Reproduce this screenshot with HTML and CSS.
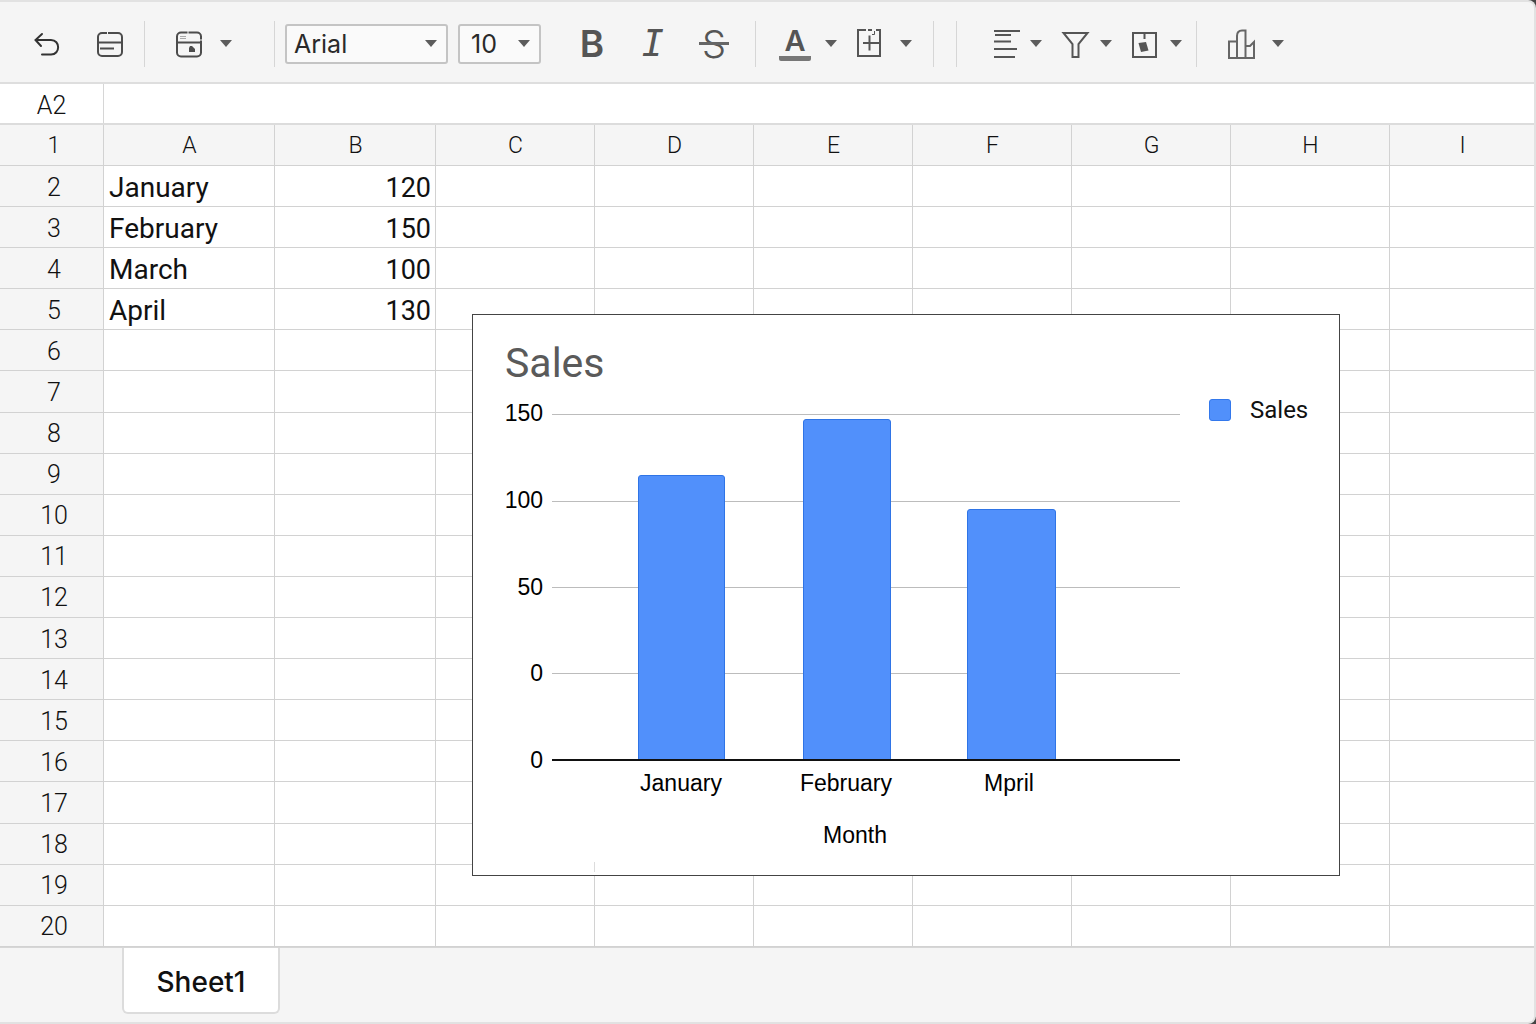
FILE: index.html
```html
<!DOCTYPE html>
<html lang="en">
<head>
<meta charset="utf-8">
<title>Sheet1</title>
<link rel="stylesheet" href="styles.css">
</head>
<body>
<div class="window">
  <header class="toolbar">
    <div class="group group-edit">
      <button class="tool" aria-label="Undo"><svg class="icon dark" viewBox="0 0 32 40"><path d="M11 13 L4.500 19 L10 25 M4.500 19 H20 C29.500 19 29.500 33.500 20 33.500 H11" stroke-linecap="round"/></svg></button>
      <button class="tool" aria-label="Rows"><svg class="icon" viewBox="0 0 32 40"><rect x="4" y="12" width="24" height="23" rx="4"/><path d="M4 21.500 H28 M6 27.500 H20"/><path d="M13.500 10 V13" stroke="#f5f5f5" stroke-width="1"/></svg></button>
    </div>
    <div class="group group-view">
      <button class="drop" aria-label="Format"><svg class="icon" viewBox="0 0 32 40"><rect x="4" y="11.500" width="24" height="24" rx="4"/><path d="M4 21.500 H28"/><path d="M15 9 V13 M26 19 H30" stroke="#f5f5f5" stroke-width="1"/><path d="M7 15.500 H13 M7 17.500 H13" stroke="#aaa" stroke-width="1"/><path d="M17 25 H19 L22 28 V31 H16 V27 Z" fill="#4c4c4c" stroke="none"/></svg><span class="caret"></span></button>
    </div>
    <div class="group group-font">
      <label class="picker picker-font"><select aria-label="Font"><option>Arial</option></select><span class="caret"></span></label>
      <label class="picker picker-size"><select aria-label="Font size"><option>10</option></select><span class="caret"></span></label>
    </div>
    <div class="group group-style">
      <button class="tool bold" aria-label="Bold">B</button>
      <button class="tool italic" aria-label="Italic">I</button>
      <button class="tool strike" aria-label="Strikethrough">S</button>
    </div>
    <div class="group group-cell">
      <button class="drop" aria-label="Text color"><span class="ink">A</span><span class="caret"></span></button>
      <button class="drop" aria-label="Borders"><svg class="icon grey" viewBox="0 0 32 40"><path d="M12 9 H4 V35 H26 V9 H22 M14 9 H18"/><path d="M9 22 H26 M15.500 14.500 V29.500"/><path d="M18 13.500 H20.500 V10" stroke-width="1"/></svg><span class="caret"></span></button>
    </div>
    <div class="group group-data">
      <button class="drop" aria-label="Align"><svg class="icon grey" viewBox="0 0 32 40"><path d="M5 10 H31 M6 14 H22 M5 20.500 H22 M5 28 H28 M5 36 H26"/></svg><span class="caret"></span></button>
      <button class="drop" aria-label="Filter"><svg class="icon grey" viewBox="0 0 32 40"><path d="M4.500 12 H28.500 L19.500 23 V36 H13.500 V23 Z"/></svg><span class="caret"></span></button>
      <button class="drop" aria-label="Insert"><svg class="icon grey" viewBox="0 0 32 40"><rect x="4" y="12" width="23" height="24"/><path d="M15.500 12 V18"/><path d="M9.500 22 L17 21 L19.500 29.500 L12 31 Z" fill="#555" stroke="none"/></svg><span class="caret"></span></button>
    </div>
    <div class="group group-chart">
      <button class="drop" aria-label="Insert chart"><svg class="icon grey thin" viewBox="0 0 32 40"><path d="M12 20.500 H4 V37 H29 V21 L25 25 H21 M12 37 V15 Q12 9.500 17 9.500 H20.500 V37"/></svg><span class="caret"></span></button>
    </div>
  </header>

  <div class="formula-bar">
    <input class="name-box" aria-label="Cell name" value="A2">
    <input class="formula" aria-label="Formula">
  </div>

  <main class="sheet">
    <table class="grid">
      <colgroup><col class="c-num"><col class="c-a"><col class="c-b"><col class="c-std"><col class="c-std"><col class="c-std"><col class="c-std"><col class="c-std"><col class="c-std"><col></colgroup>
      <thead><tr><th>1</th><th>A</th><th>B</th><th>C</th><th>D</th><th>E</th><th>F</th><th>G</th><th>H</th><th>I</th></tr></thead>
      <tbody>
        <tr><th>2</th><td>January</td><td class="num">120</td><td></td><td></td><td></td><td></td><td></td><td></td><td></td></tr>
        <tr><th>3</th><td>February</td><td class="num">150</td><td></td><td></td><td></td><td></td><td></td><td></td><td></td></tr>
        <tr><th>4</th><td>March</td><td class="num">100</td><td></td><td></td><td></td><td></td><td></td><td></td><td></td></tr>
        <tr><th>5</th><td>April</td><td class="num">130</td><td></td><td></td><td></td><td></td><td></td><td></td><td></td></tr>
        <tr><th>6</th><td></td><td></td><td></td><td></td><td></td><td></td><td></td><td></td><td></td></tr>
        <tr><th>7</th><td></td><td></td><td></td><td></td><td></td><td></td><td></td><td></td><td></td></tr>
        <tr><th>8</th><td></td><td></td><td></td><td></td><td></td><td></td><td></td><td></td><td></td></tr>
        <tr><th>9</th><td></td><td></td><td></td><td></td><td></td><td></td><td></td><td></td><td></td></tr>
        <tr><th>10</th><td></td><td></td><td></td><td></td><td></td><td></td><td></td><td></td><td></td></tr>
        <tr><th>11</th><td></td><td></td><td></td><td></td><td></td><td></td><td></td><td></td><td></td></tr>
        <tr><th>12</th><td></td><td></td><td></td><td></td><td></td><td></td><td></td><td></td><td></td></tr>
        <tr><th>13</th><td></td><td></td><td></td><td></td><td></td><td></td><td></td><td></td><td></td></tr>
        <tr><th>14</th><td></td><td></td><td></td><td></td><td></td><td></td><td></td><td></td><td></td></tr>
        <tr><th>15</th><td></td><td></td><td></td><td></td><td></td><td></td><td></td><td></td><td></td></tr>
        <tr><th>16</th><td></td><td></td><td></td><td></td><td></td><td></td><td></td><td></td><td></td></tr>
        <tr><th>17</th><td></td><td></td><td></td><td></td><td></td><td></td><td></td><td></td><td></td></tr>
        <tr><th>18</th><td></td><td></td><td></td><td></td><td></td><td></td><td></td><td></td><td></td></tr>
        <tr><th>19</th><td></td><td></td><td></td><td></td><td></td><td></td><td></td><td></td><td></td></tr>
        <tr><th>20</th><td></td><td></td><td></td><td></td><td></td><td></td><td></td><td></td><td></td></tr>
      </tbody>
    </table>

    <figure class="chart">
      <figcaption class="chart-title">Sales</figcaption>
      <div class="chart-body">
        <svg class="plot" width="708" height="488" viewBox="0 0 708 488" role="img" aria-label="Sales by month">
          <path class="rule" d="M79 27.500 H707 M79 114.500 H707 M79 200.500 H707 M79 286.500 H707"/>
          <path class="bar" d="M165.500 373 V91 Q165.500 88.500 168 88.500 H249 Q251.500 88.500 251.500 91 V373"/>
          <path class="bar" d="M330.500 373 V35 Q330.500 32.500 333 32.500 H415 Q417.500 32.500 417.500 35 V373"/>
          <path class="bar" d="M494.500 373 V125 Q494.500 122.500 497 122.500 H580 Q582.500 122.500 582.500 125 V373"/>
          <path class="axis" d="M79 373 H707"/>
          <path class="tick" d="M121.500 475 V485"/>
          <g text-anchor="end">
            <text x="70" y="34">150</text>
            <text x="70" y="121">100</text>
            <text x="70" y="208">50</text>
            <text x="70" y="294">0</text>
            <text x="70" y="381">0</text>
          </g>
          <g text-anchor="middle">
            <text x="208" y="404">January</text>
            <text x="373" y="404">February</text>
            <text x="536" y="404">Mpril</text>
            <text x="382" y="456">Month</text>
          </g>
        </svg>
        <div class="legend"><span class="swatch"></span>Sales</div>
      </div>
    </figure>
  </main>

  <footer class="tabs">
    <button class="tab">Sheet1</button>
  </footer>
</div>
</body>
</html>
```
FILE: styles.css
```css
* { box-sizing: border-box; }

body {
  margin: 0;
  background: #444;
  color: #111;
  font-family: Roboto, "Liberation Sans", sans-serif;
}

button, input, select {
  margin: 0;
  padding: 0;
  border: 0;
  background: none;
  color: inherit;
  font: inherit;
}

.window {
  display: flex;
  flex-direction: column;
  min-height: 100vh;
  border: 2px solid #e2e2e2;
  border-left: 0;
  border-radius: 0 8px 8px 0;
  background: #f5f5f5;
  overflow: hidden;
}

/* Toolbar */
.toolbar {
  display: flex;
  align-items: center;
  height: 82px;
  padding-top: 4px;
  border-bottom: 2px solid #dedede;
}

.group {
  display: flex;
  align-items: center;
  height: 46px;
  border-right: 1px solid #d6d6d6;
}

.group-edit { gap: 31px; padding: 0 18px 0 31px; }
.group-view { padding: 0 38px 0 28px; }
.group-font { gap: 10px; padding-left: 10px; border: 0; }
.group-style { gap: 29px; padding: 0 25px 0 35px; }
.group-cell { gap: 13px; padding: 0 17px 0 23px; }
.group-data { gap: 13px; margin-left: 22px; padding: 0 10px 0 32px; border-left: 1px solid #d6d6d6; }
.group-chart { padding-left: 28px; border: 0; }

.tool, .drop {
  display: flex;
  align-items: center;
  justify-content: center;
  height: 46px;
  color: #555;
}

.tool { width: 32px; }
.drop { gap: 11px; }
.group-cell .drop { gap: 10px; }
.group-data .drop { gap: 5px; }

.icon {
  width: 32px;
  height: 40px;
  margin-bottom: 6px;
  fill: none;
  stroke: #4c4c4c;
  stroke-width: 2;
}

.dark { stroke: #333; }
.grey { stroke: #555; }
.thin { stroke: #666; }

.caret {
  width: 20px;
  height: 8px;
  background: #5c5c5c;
  clip-path: polygon(4px 0, 16px 0, 10px 7px);
}

.picker {
  display: flex;
  align-items: center;
  height: 40px;
  border: 2px solid #c4c4c4;
  border-radius: 3px;
  background: #fafafa;
  color: #2a2a2a;
  font-family: Inter, sans-serif;
  font-size: 25px;
}

.picker select {
  flex: 1;
  min-width: 0;
  appearance: none;
  outline: 0;
}

.picker .caret { margin-right: 5px; }
.picker-font { width: 163px; padding-left: 7px; }
.picker-size { width: 83px; padding-left: 11px; }

.bold { font: 600 37px/46px Inter, sans-serif; }
.italic { font: italic 37px/46px "DejaVu Sans Mono", monospace; }
.strike { position: relative; font: 300 38px/46px Inter, sans-serif; }
.strike::after {
  content: "";
  position: absolute;
  inset: 21px 1px auto;
  height: 3px;
  background: #666;
}

.ink {
  width: 32px;
  padding-bottom: 1px;
  border-bottom: 5px solid #777;
  border-radius: 2px;
  font: 600 29px/28px Inter, sans-serif;
}

/* Formula bar */
.formula-bar {
  display: flex;
  height: 41px;
  border-bottom: 2px solid #dcdcdc;
  background: #fff;
}

.name-box {
  width: 104px;
  padding-top: 4px;
  border-right: 1px solid #d6d6d6;
  color: #111;
  font-size: 25px;
  font-weight: 300;
  text-align: center;
}

.formula { flex: 1; min-width: 0; padding: 0 6px; font-size: 25px; }

/* Grid */
.sheet { position: relative; }

.grid {
  width: 100%;
  height: 822px;
  table-layout: fixed;
  border-spacing: 0;
  background: #fff;
}

.c-num { width: 104px; }
.c-a { width: 171px; }
.c-b { width: 161px; }
.c-std { width: 159px; }

.grid th, .grid td {
  height: 41px;
  padding: 3px 4px 0 5px;
  border-right: 1px solid #d2d2d2;
  border-bottom: 1px solid #d2d2d2;
  line-height: 32px;
  white-space: nowrap;
}

.grid th {
  background: #f5f5f5;
  color: #111;
  font-size: 25px;
  font-weight: 300;
}

.grid th:first-child { padding-left: 9px; }
.grid thead th { padding-top: 1px; font-size: 23px; }
.grid td { font-size: 28px; text-align: left; }
.grid .num { font-size: 27px; text-align: right; }
.grid tr > :last-child { border-right: 0; }

/* Floating chart */
.chart {
  position: absolute;
  top: 189px;
  left: 472px;
  width: 868px;
  margin: 0;
  padding-top: 24px;
  border: 1px solid #444;
  background: #fff;
}

.chart-title {
  padding-left: 32px;
  color: #5a5a5a;
  font-size: 41px;
  line-height: 48px;
}

.chart-body { display: flex; align-items: flex-start; }
.plot { flex: none; font: 23px "Liberation Sans", Arial, sans-serif; }
.rule { fill: none; stroke: #bcbcbc; }
.tick { stroke: #dcdcdc; }
.bar { fill: #5190fb; stroke: #2f74e6; }
.axis { stroke: #111; stroke-width: 2; }

.legend {
  display: flex;
  align-items: center;
  gap: 19px;
  margin-left: 28px;
  padding-top: 8px;
  font-size: 24px;
  line-height: 30px;
}

.swatch {
  width: 22px;
  height: 22px;
  border: 1px solid #3378ec;
  border-radius: 3px;
  background: #5190fb;
}

/* Sheet tabs */
.tabs {
  display: flex;
  flex: 1;
  align-items: flex-start;
  padding: 0 122px 8px;
  border-top: 1px solid #d6d6d6;
}

.tab {
  width: 158px;
  height: 66px;
  padding-top: 4px;
  border: 2px solid #dcdcdc;
  border-top: 0;
  border-radius: 0 0 6px 6px;
  background: #fff;
  color: #111;
  font: 500 28px/32px Inter, sans-serif;
}
```
